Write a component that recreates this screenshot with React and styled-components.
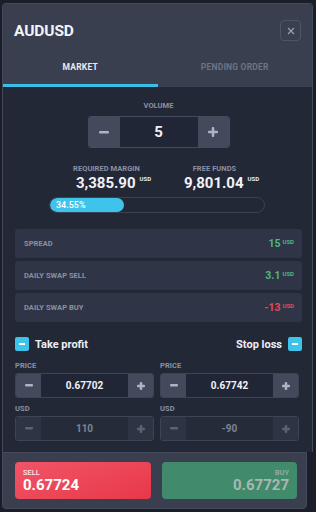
import React from "react";
import styled, { createGlobalStyle } from "styled-components";

const Global = createGlobalStyle`
  html, body { margin: 0; padding: 0; background: #1a1e29; }
  body { font-family: Roboto, "Liberation Sans", sans-serif; }
  * { box-sizing: border-box; }
`;

const Page = styled.div`
  width: 316px;
  height: 512px;
  background: #1a1e29;
  padding: 3px 0 0 2px;
  overflow: hidden;
`;

const Panel = styled.div`
  width: 311px;
  height: 449px;
  border: 1px solid #444a5a;
  border-bottom: none;
  border-radius: 4px 4px 0 0;
  background: #232837;
  display: flex;
  flex-direction: column;
`;

const Header = styled.div`
  background: #393f4f;
  border-radius: 4px 4px 0 0;
`;

const TitleRow = styled.div`
  height: 50px;
  display: flex;
  align-items: center;
  justify-content: space-between;
  padding: 3px 11px 0 11px;
`;

const Title = styled.div`
  color: #f3f4f7;
  font-size: 15.5px;
  font-weight: 700;
  letter-spacing: -0.1px;
`;

const CloseBtn = styled.div`
  width: 21px;
  height: 21px;
  border: 1px solid #4f5566;
  border-radius: 4px;
  display: flex;
  align-items: center;
  justify-content: center;
`;

const Tabs = styled.div`
  display: flex;
  height: 33px;
`;

const Tab = styled.div`
  flex: 1;
  display: flex;
  align-items: center;
  justify-content: center;
  padding-bottom: 4px;
  font-size: 8.5px;
  font-weight: 700;
  letter-spacing: 0.2px;
  color: ${(p) => (p.$active ? "#e8eaf0" : "#6d7486")};
  border-bottom: 3px solid ${(p) => (p.$active ? "#3bbfe8" : "transparent")};
`;

const Body = styled.div`
  flex: 1;
  padding: 14px 10px 0 12px;
  display: flex;
  flex-direction: column;
`;

const Center = styled.div`
  display: flex;
  flex-direction: column;
  align-items: center;
`;

const Label = styled.div`
  font-size: 7.5px;
  font-weight: 700;
  color: #8a91a4;
  letter-spacing: 0.05px;
`;

const VolumeStepper = styled.div`
  margin-top: 6px;
  display: flex;
  height: 32px;
  width: 142px;
  border: 1px solid #454b5c;
  border-radius: 3px;
  overflow: hidden;
`;

const StepBtn = styled.div`
  width: ${(p) => p.$w}px;
  flex: none;
  background: ${(p) => (p.$disabled ? "#2f3444" : "#434a5c")};
  display: flex;
  align-items: center;
  justify-content: center;
  color: ${(p) => (p.$disabled ? "#5b6274" : "#aeb4c3")};
`;

const StepInput = styled.div`
  flex: 1;
  display: flex;
  align-items: center;
  justify-content: center;
  background: ${(p) => (p.$disabled ? "#262b3a" : "#212636")};
  color: ${(p) => (p.$disabled ? "#7d8495" : "#f1f2f6")};
  font-size: ${(p) => p.$size}px;
  font-weight: 700;
`;

const Funds = styled.div`
  margin-top: 16px;
  display: grid;
  grid-template-columns: 100px 100px;
  justify-content: center;
  column-gap: 8px;
  padding-left: 4px;
`;

const FundCol = styled.div`
  display: flex;
  flex-direction: column;
  align-items: center;
  gap: 1px;
`;

const FundValue = styled.div`
  color: #f1f2f6;
  font-size: 15px;
  font-weight: 700;
  display: flex;
  align-items: flex-start;
  gap: 4px;
  margin-left: 14px;
`;

const Sup = styled.span`
  font-size: 6px;
  font-weight: 700;
  margin-top: 1px;
  color: ${(p) => p.$color || "#e8eaf0"};
`;

const Progress = styled.div`
  margin: 5px 0 0 34px;
  width: 216px;
  height: 16px;
  border: 1px solid #3b4152;
  border-radius: 8px;
  overflow: hidden;
`;

const ProgressFill = styled.div`
  height: 100%;
  background: #3ec3ea;
  border-radius: 8px;
  color: #ffffff;
  font-size: 9px;
  font-weight: 500;
  display: flex;
  align-items: center;
  padding-left: 6px;
`;

const InfoList = styled.div`
  margin-top: 16px;
  display: flex;
  flex-direction: column;
  gap: 3px;
`;

const InfoRow = styled.div`
  height: 29px;
  background: #2f3546;
  border-radius: 3px;
  display: flex;
  align-items: center;
  justify-content: space-between;
  padding: 0 8px 0 9px;
`;

const InfoValue = styled.div`
  display: flex;
  align-items: flex-start;
  gap: 2px;
  color: ${(p) => p.$color};
  font-size: 10.5px;
  font-weight: 700;
`;

const ToggleRow = styled.div`
  margin-top: 15px;
  display: flex;
  justify-content: space-between;
  align-items: center;
`;

const Toggle = styled.div`
  display: flex;
  align-items: center;
  gap: 6px;
  color: #eceef3;
  font-size: 11px;
  font-weight: 700;
`;

const Check = styled.div`
  width: 14px;
  height: 14px;
  border-radius: 2px;
  background: #3ec3ea;
  display: flex;
  align-items: center;
  justify-content: center;
  &::after {
    content: "";
    width: 6px;
    height: 2px;
    background: #ffffff;
  }
`;

const Grid = styled.div`
  margin-top: 10px;
  display: grid;
  grid-template-columns: 139px 139px;
  column-gap: 6px;
  row-gap: 6px;
`;

const Field = styled.div`
  display: flex;
  flex-direction: column;
  gap: 3px;
`;

const SmallStepper = styled.div`
  display: flex;
  height: 25px;
  border: 1px solid #3e4454;
  border-radius: 3px;
  overflow: hidden;
`;

const Footer = styled.div`
  width: 305px;
  height: 57px;
  background: #393f4f;
  border: 1px solid #454b5b;
  border-radius: 0 0 4px 4px;
  display: flex;
  align-items: center;
  gap: 11px;
  padding: 0 9px 0 12px;
`;

const TradeBtn = styled.div`
  width: ${(p) => p.$w}px;
  height: 37px;
  border-radius: 4px;
  background: ${(p) => p.$bg};
  display: flex;
  flex-direction: column;
  justify-content: center;
  align-items: ${(p) => (p.$right ? "flex-end" : "flex-start")};
  padding: 0 8px;
  color: ${(p) => p.$color};
`;

const TradeLabel = styled.div`
  font-size: 7.5px;
  font-weight: 500;
  opacity: 0.85;
`;

const TradePrice = styled.div`
  font-size: 15px;
  font-weight: 700;
  line-height: 16px;
`;

const Minus = ({ w = 9 }) => (
  <svg width={w} height="3" viewBox={`0 0 ${w} 3`}>
    <rect x="0" y="0" width={w} height="2.5" rx="1" fill="currentColor" />
  </svg>
);
const Plus = ({ w = 9 }) => (
  <svg width={w} height={w} viewBox={`0 0 ${w} ${w}`}>
    <rect x="0" y={(w - 2.5) / 2} width={w} height="2.5" rx="1" fill="currentColor" />
    <rect x={(w - 2.5) / 2} y="0" width="2.5" height={w} rx="1" fill="currentColor" />
  </svg>
);

const Stepper = ({ value, disabled }) => (
  <SmallStepper>
    <StepBtn $w={25} $disabled={disabled}><Minus w={8} /></StepBtn>
    <StepInput $size={10} $disabled={disabled}>{value}</StepInput>
    <StepBtn $w={25} $disabled={disabled}><Plus w={8} /></StepBtn>
  </SmallStepper>
);

const rows = [
  { label: "SPREAD", value: "15", color: "#4fb57f" },
  { label: "DAILY SWAP SELL", value: "3.1", color: "#4fb57f" },
  { label: "DAILY SWAP BUY", value: "-13", color: "#e14a5a" },
];

export default function App() {
  return (
    <Page>
      <Global />
      <Panel>
        <Header>
          <TitleRow>
            <Title>AUDUSD</Title>
            <CloseBtn>
              <svg width="8" height="8" viewBox="0 0 8 8">
                <path d="M1 1L7 7M7 1L1 7" stroke="#9aa0b0" strokeWidth="1.2" />
              </svg>
            </CloseBtn>
          </TitleRow>
          <Tabs>
            <Tab $active>MARKET</Tab>
            <Tab>PENDING ORDER</Tab>
          </Tabs>
        </Header>
        <Body>
          <Center>
            <Label>VOLUME</Label>
            <VolumeStepper>
              <StepBtn $w={31}><Minus w={10} /></StepBtn>
              <StepInput $size={15}>5</StepInput>
              <StepBtn $w={31}><Plus w={10} /></StepBtn>
            </VolumeStepper>
          </Center>
          <Funds>
            <FundCol>
              <Label>REQUIRED MARGIN</Label>
              <FundValue>3,385.90 <Sup>USD</Sup></FundValue>
            </FundCol>
            <FundCol>
              <Label>FREE FUNDS</Label>
              <FundValue>9,801.04 <Sup>USD</Sup></FundValue>
            </FundCol>
          </Funds>
          <Progress>
            <ProgressFill style={{ width: "34.55%" }}>34.55%</ProgressFill>
          </Progress>
          <InfoList>
            {rows.map((r) => (
              <InfoRow key={r.label}>
                <Label>{r.label}</Label>
                <InfoValue $color={r.color}>
                  {r.value}
                  <Sup $color={r.color}>USD</Sup>
                </InfoValue>
              </InfoRow>
            ))}
          </InfoList>
          <ToggleRow>
            <Toggle><Check />Take profit</Toggle>
            <Toggle>Stop loss<Check /></Toggle>
          </ToggleRow>
          <Grid>
            <Field>
              <Label>PRICE</Label>
              <Stepper value="0.67702" />
            </Field>
            <Field>
              <Label>PRICE</Label>
              <Stepper value="0.67742" />
            </Field>
            <Field>
              <Label>USD</Label>
              <Stepper value="110" disabled />
            </Field>
            <Field>
              <Label>USD</Label>
              <Stepper value="-90" disabled />
            </Field>
          </Grid>
        </Body>
      </Panel>
      <Footer>
        <TradeBtn $w={136} $bg="linear-gradient(160deg, #f05566, #e8384a)" $color="#ffffff">
          <TradeLabel>SELL</TradeLabel>
          <TradePrice>0.67724</TradePrice>
        </TradeBtn>
        <TradeBtn $w={135} $bg="#428a6c" $color="#a7b8b1" $right>
          <TradeLabel>BUY</TradeLabel>
          <TradePrice>0.67727</TradePrice>
        </TradeBtn>
      </Footer>
    </Page>
  );
}
